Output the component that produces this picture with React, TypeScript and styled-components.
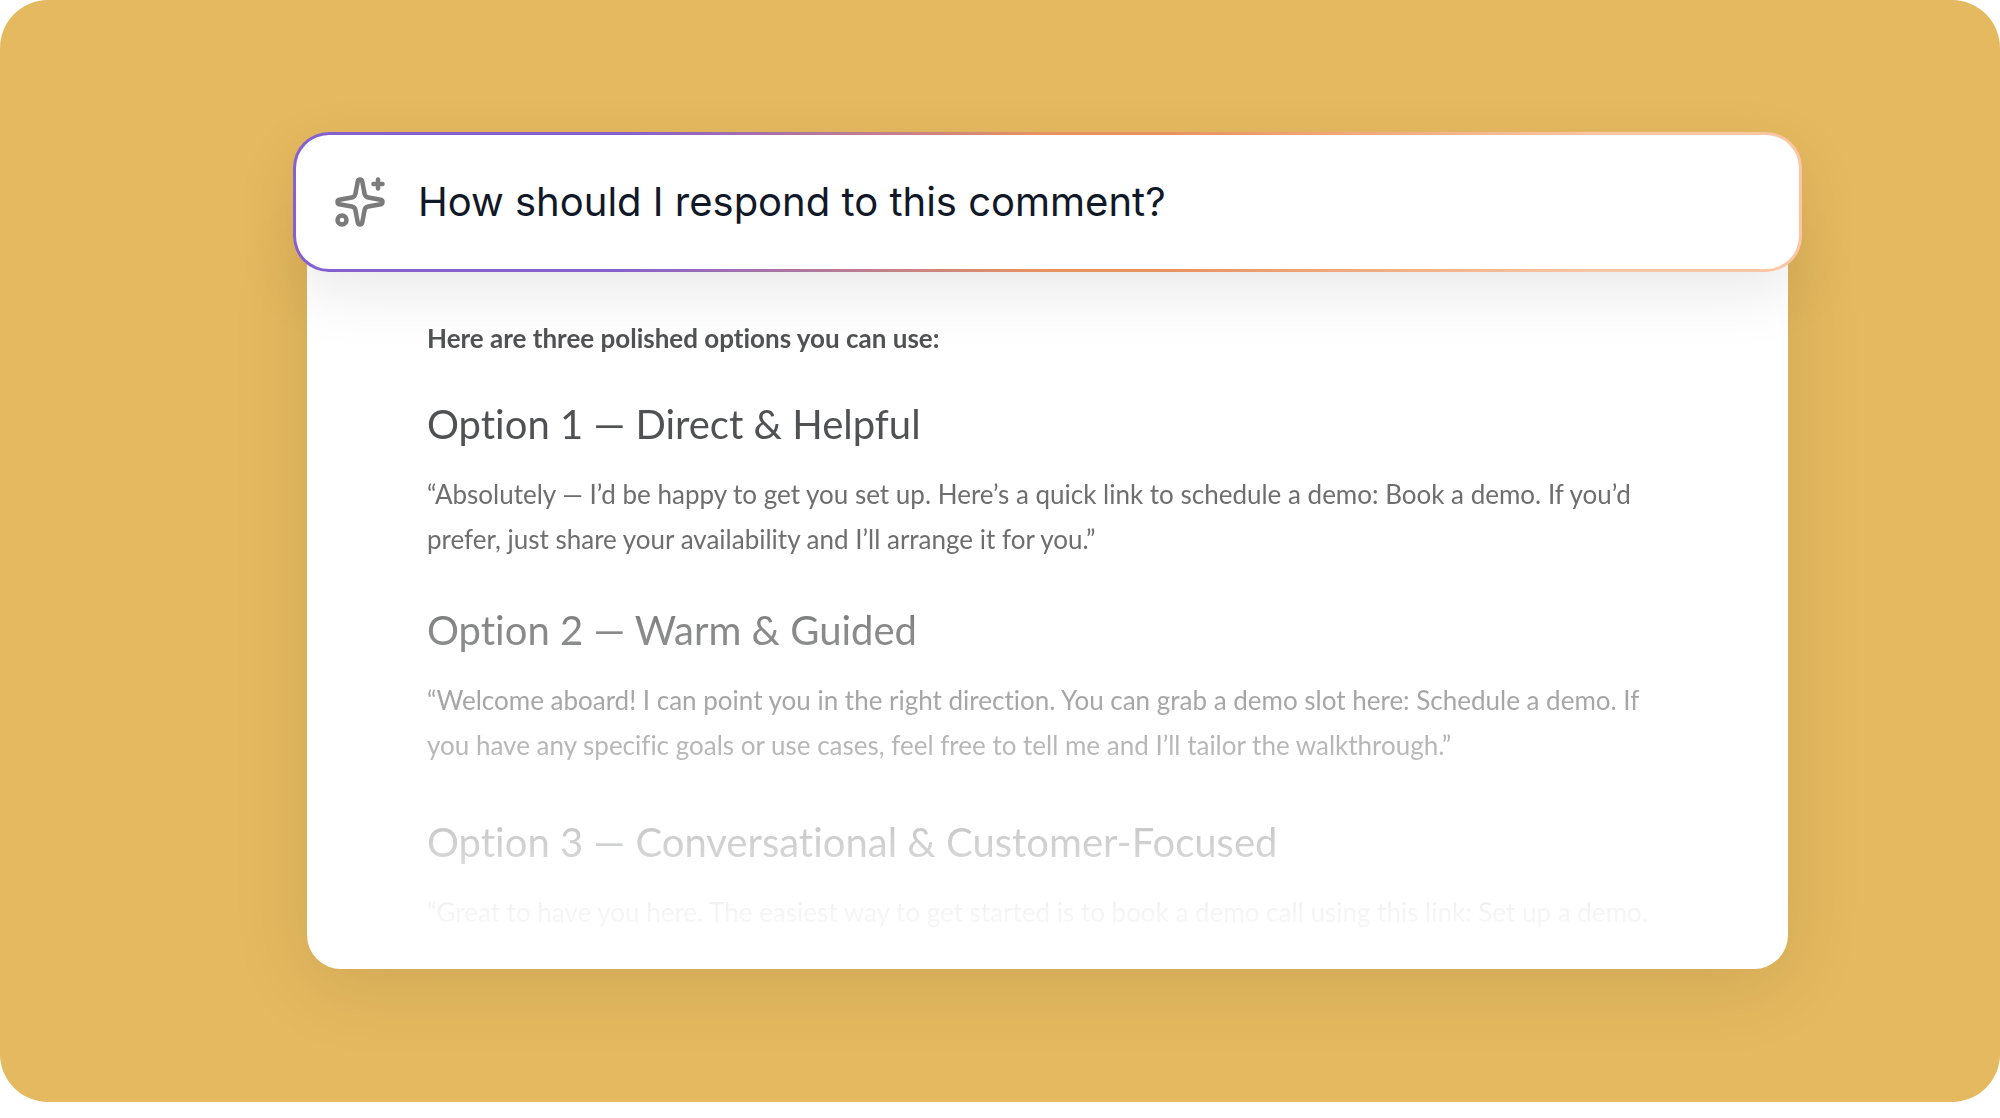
import React from "react";
import styled, { createGlobalStyle } from "styled-components";
import { Sparkles } from "lucide-react";

const GlobalStyle = createGlobalStyle`
  *, *::before, *::after { box-sizing: border-box; }
  body { margin: 0; background: #ffffff; }
`;

const Stage = styled.main`
  padding: 132px 198px 133px 293px;
  border-radius: 48px;
  background: #e5b95f;
  font-family: Lato, "Open Sans", sans-serif;
  font-variant-ligatures: no-common-ligatures;
`;

const PromptBar = styled.label`
  position: relative;
  display: flex;
  align-items: center;
  gap: 31px;
  height: 140px;
  padding: 0 37px;
  border: 3px solid transparent;
  border-radius: 36px;
  background:
    linear-gradient(#ffffff, #ffffff) padding-box,
    linear-gradient(93deg, #8560d0 22%, #e8935f 50%, #e8935f 58%, #fcc5a4 86%) border-box;
  box-shadow: 0 20px 64px rgba(0, 0, 0, 0.09);
  color: #7b7b7b;
`;

const PromptInput = styled.input`
  flex: 1;
  min-width: 0;
  padding: 0;
  border: 0;
  outline: 0;
  background: transparent;
  color: #111827;
  font-family: Inter, sans-serif;
  font-size: 40px;
  line-height: 56px;
`;

const AnswerPanel = styled.section`
  margin: -36px 14px 0 14px;
  padding: 80px 104px 34px 120px;
  border-radius: 0 0 34px 34px;
  background: #ffffff;
  box-shadow: 0 16px 80px rgba(0, 0, 0, 0.1);
`;

const Answer = styled.div`
  color: #505152;
  mask-image: linear-gradient(
    to bottom,
    #000 38%,
    rgba(0, 0, 0, 0.67) 51%,
    rgba(0, 0, 0, 0.62) 62%,
    rgba(0, 0, 0, 0.5) 69%,
    rgba(0, 0, 0, 0.26) 86%,
    rgba(0, 0, 0, 0.06) 97%
  );
`;

const Intro = styled.p`
  margin: 0;
  font-size: 26px;
  font-weight: 700;
  line-height: 44px;
`;

const Option = styled.article<{ $space: number }>`
  margin-top: ${({ $space }) => $space}px;
`;

const OptionTitle = styled.h2`
  margin: 0 0 20px;
  font-size: 40px;
  font-weight: 400;
  line-height: 56px;
`;

const OptionText = styled.p`
  margin: 0;
  color: #6e6e6f;
  font-size: 26px;
  font-weight: 400;
  line-height: 45px;
`;

const options = [
  {
    space: 36,
    title: "Option 1 — Direct & Helpful",
    text: "“Absolutely — I’d be happy to get you set up. Here’s a quick link to schedule a demo: Book a demo. If you’d prefer, just share your availability and I’ll arrange it for you.”",
  },
  {
    space: 40,
    title: "Option 2 — Warm & Guided",
    text: "“Welcome aboard! I can point you in the right direction. You can grab a demo slot here: Schedule a demo. If you have any specific goals or use cases, feel free to tell me and I’ll tailor the walkthrough.”",
  },
  {
    space: 46,
    title: "Option 3 — Conversational & Customer-Focused",
    text: "“Great to have you here. The easiest way to get started is to book a demo call using this link: Set up a demo.",
  },
];

export default function App() {
  return (
    <>
      <GlobalStyle />
      <Stage>
        <PromptBar>
          <Sparkles size={54} strokeWidth={2} aria-hidden="true" />
          <PromptInput
            type="text"
            aria-label="Prompt"
            defaultValue="How should I respond to this comment?"
          />
        </PromptBar>
        <AnswerPanel>
          <Answer>
            <Intro>Here are three polished options you can use:</Intro>
            {options.map((option) => (
              <Option key={option.title} $space={option.space}>
                <OptionTitle>{option.title}</OptionTitle>
                <OptionText>{option.text}</OptionText>
              </Option>
            ))}
          </Answer>
        </AnswerPanel>
      </Stage>
    </>
  );
}
